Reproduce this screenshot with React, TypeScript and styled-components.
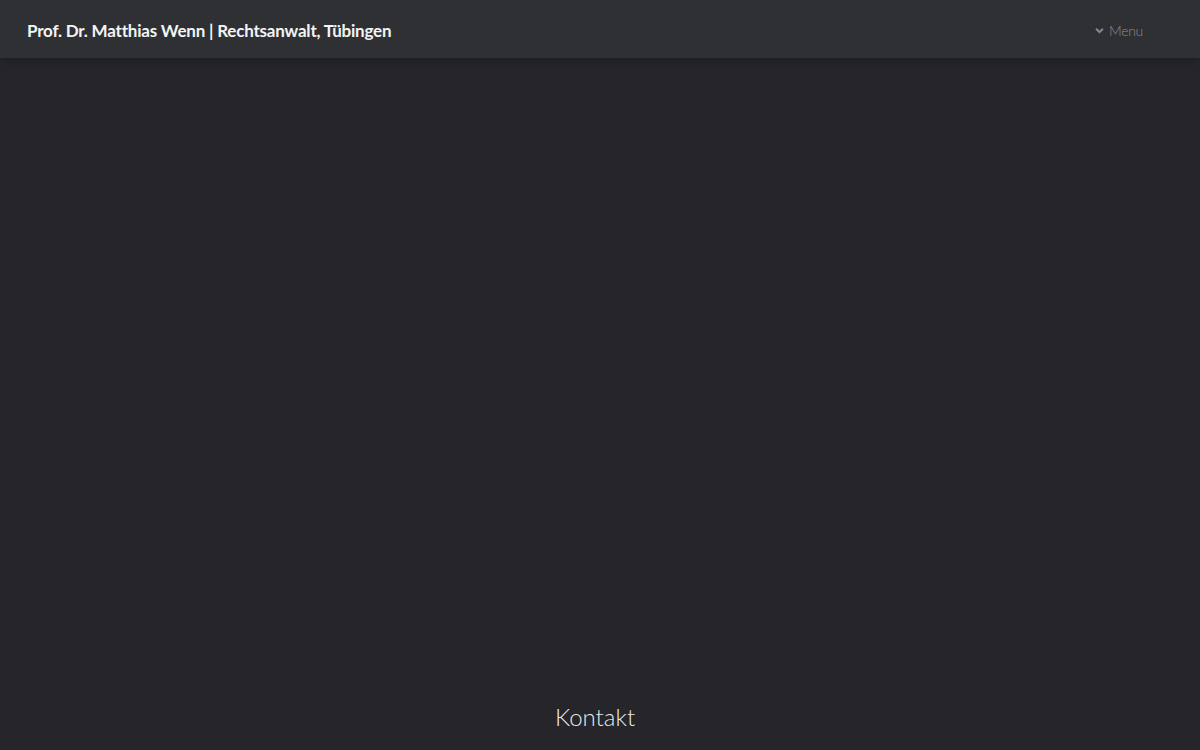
import React from "react";
import styled, { createGlobalStyle } from "styled-components";

const GlobalStyle = createGlobalStyle`
  html, body {
    margin: 0;
    padding: 0;
    background: #25252a;
  }
  body {
    font-family: "Lato", "Open Sans", sans-serif;
    color: #fff;
    overflow-y: scroll;
  }
`;

const Page = styled.div`
  min-height: 1680px;
  background: #25252a;
`;

const Header = styled.header`
  position: sticky;
  top: 0;
  height: 58px;
  display: flex;
  align-items: center;
  justify-content: space-between;
  padding: 0 57px 0 27px;
  background: #2f3034;
  box-shadow: 0 0 12px rgba(0, 0, 0, 0.35);
`;

const Title = styled.h1`
  margin: 0;
  padding-top: 2px;
  font-size: 17px;
  font-weight: 700;
  color: #f4f4f4;
  letter-spacing: -0.2px;
`;

const MenuLink = styled.a`
  display: flex;
  align-items: center;
  gap: 5px;
  padding-top: 2px;
  color: #8a8a8e;
  font-size: 14px;
  font-weight: 300;
  letter-spacing: -0.3px;
  text-decoration: none;
  cursor: pointer;
`;

const Hero = styled.section`
  height: 634px;
`;

const Section = styled.section`
  display: flex;
  justify-content: center;
  padding: 10px 10px 0 0;
`;

const Heading = styled.h2`
  margin: 0;
  font-size: 24px;
  font-weight: 300;
  color: #e8e8ea;
`;

export default function App() {
  return (
    <>
      <GlobalStyle />
      <Page>
        <Header>
          <Title>Prof. Dr. Matthias Wenn | Rechtsanwalt, Tübingen</Title>
          <MenuLink>
            <svg width="9" height="9" viewBox="0 0 10 10">
              <path d="M1.2 3 L5 6.8 L8.8 3" fill="none" stroke="#8a8a8e" strokeWidth="2.2" />
            </svg>
            Menu
          </MenuLink>
        </Header>
        <Hero />
        <Section>
          <Heading>Kontakt</Heading>
        </Section>
      </Page>
    </>
  );
}
